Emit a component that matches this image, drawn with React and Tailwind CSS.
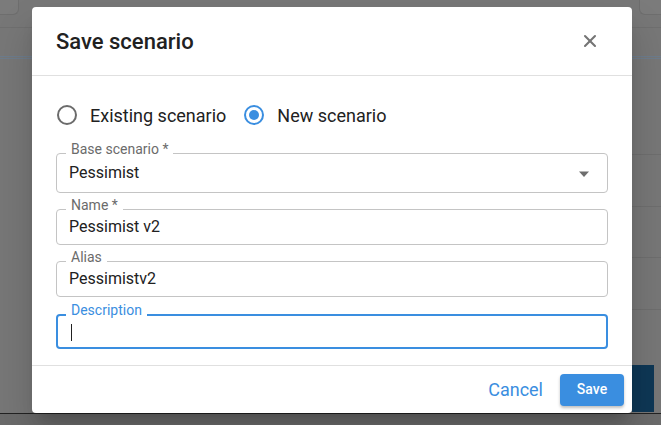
import React from "react";
import { X } from "lucide-react";

function Field({ label, value, focused, select, cursor, h }) {
  return (
    <div
      className={`relative rounded-[4px] ${
        focused ? "border-2 border-[#3a8ee0]" : "border border-[#c4c4c4]"
      } ${h} flex items-center`}
    >
      <span
        className={`absolute ${focused ? "-top-[14px] left-[8px]" : "-top-[13px] left-[9px]"} bg-white px-[5px] text-[14px] leading-[16px] ${
          focused ? "text-[#3a8ee0]" : "text-[#6b6b6b]"
        }`}
      >
        {label}
      </span>
      <span className={`${focused ? "pl-[13px]" : "pl-[12px]"} text-[16px] text-[#212121] flex-1`}>
        {value}
        {cursor && <span className="inline-block w-px h-[17px] bg-[#212121] align-middle" />}
      </span>
      {select && (
        <svg className="mr-[17px] mt-[2px]" width="12" height="7" viewBox="0 0 12 7">
          <path d="M1 0.5h10L6 6z" fill="#6e6e6e" />
        </svg>
      )}
    </div>
  );
}

function Radio({ checked, label }) {
  return (
    <label className="flex items-center gap-[13px]">
      <span
        className={`w-[20px] h-[20px] rounded-full border-2 flex items-center justify-center ${
          checked ? "border-[#3a8ee0]" : "border-[#6b6b6b]"
        }`}
      >
        {checked && <span className="w-[10px] h-[10px] rounded-full bg-[#3a8ee0]" />}
      </span>
      <span className="text-[18px] text-[#212121]">{label}</span>
    </label>
  );
}

export default function App() {
  return (
    <div
      className="relative w-[661px] h-[425px] overflow-hidden bg-[#777777]"
      style={{ fontFamily: "Roboto, 'Liberation Sans', sans-serif" }}
    >
      {/* backdrop content (dimmed page) */}
      <div className="flex flex-col h-full">
        <div className="flex justify-between h-[27px]">
          <div className="w-[19px] h-[15px] rounded-br-[6px] border-r border-b border-[#6e6e6e] bg-[#7b7b7b]" />
          <div className="w-[22px] h-[15px] rounded-bl-[6px] border-l border-b border-[#6e6e6e] bg-[#7b7b7b]" />
        </div>
        <div className="h-[29px] border-t border-[#6f6f6f]" />
        <div className="h-[3px] border-y border-[#6d7c8c]" />
        <div className="flex-1 flex justify-end">
          <div className="w-[29px] flex flex-col">
            <div className="h-[96px] border-b border-[#6e6e6e]" />
            <div className="h-[52px] border-b border-[#6e6e6e]" />
            <div className="h-[51px] border-b border-[#6e6e6e]" />
            <div className="h-[52px] border-b border-[#6e6e6e]" />
            <div className="h-[55px]" />
            <div className="w-[22px] h-[47px] bg-[#0e3755]" />
          </div>
        </div>
        <div className="h-[12px] border-t border-[#222] bg-[#6b6b6b]" />
      </div>

      {/* dialog */}
      <div className="absolute left-[32px] top-[7px] w-[600px] bg-white rounded-[4px] shadow-[0_11px_15px_-7px_rgba(0,0,0,0.2),0_24px_38px_3px_rgba(0,0,0,0.14)] flex flex-col">
        <div className="h-[69px] px-6 flex items-center justify-between border-b border-[#e0e0e0]">
          <h2 className="text-[22px] font-medium text-[#212121]">Save scenario</h2>
          <X className="w-[20px] h-[20px] text-[#757575] mr-[8px]" strokeWidth={2.5} />
        </div>
        <div className="px-6 pt-[27px] pb-[16px] flex flex-col">
          <div className="flex items-center gap-[18px] ml-px h-[24px]">
            <Radio label="Existing scenario" />
            <Radio checked label="New scenario" />
          </div>
          <div className="mt-[26px] flex flex-col">
            <Field select h="h-[40px]" label="Base scenario *" value="Pessimist" />
            <div className="h-[16px]" />
            <Field h="h-[36px]" label="Name *" value="Pessimist v2" />
            <div className="h-[16px]" />
            <Field h="h-[36px]" label="Alias" value="Pessimistv2" />
            <div className="h-[17px]" />
            <Field focused cursor h="h-[35px]" label="Description" value="" />
          </div>
        </div>
        <div className="h-[48px] border-t border-[#e0e0e0] flex items-center justify-end gap-[17px] pr-[8px]">
          <button className="text-[18px] text-[#3a8ee0]">Cancel</button>
          <button className="w-[64px] h-[32px] rounded-[4px] bg-[#3a8ee0] text-white text-[14px] font-medium shadow-[0_2px_3px_rgba(0,0,0,0.25)]">
            Save
          </button>
        </div>
      </div>
    </div>
  );
}
